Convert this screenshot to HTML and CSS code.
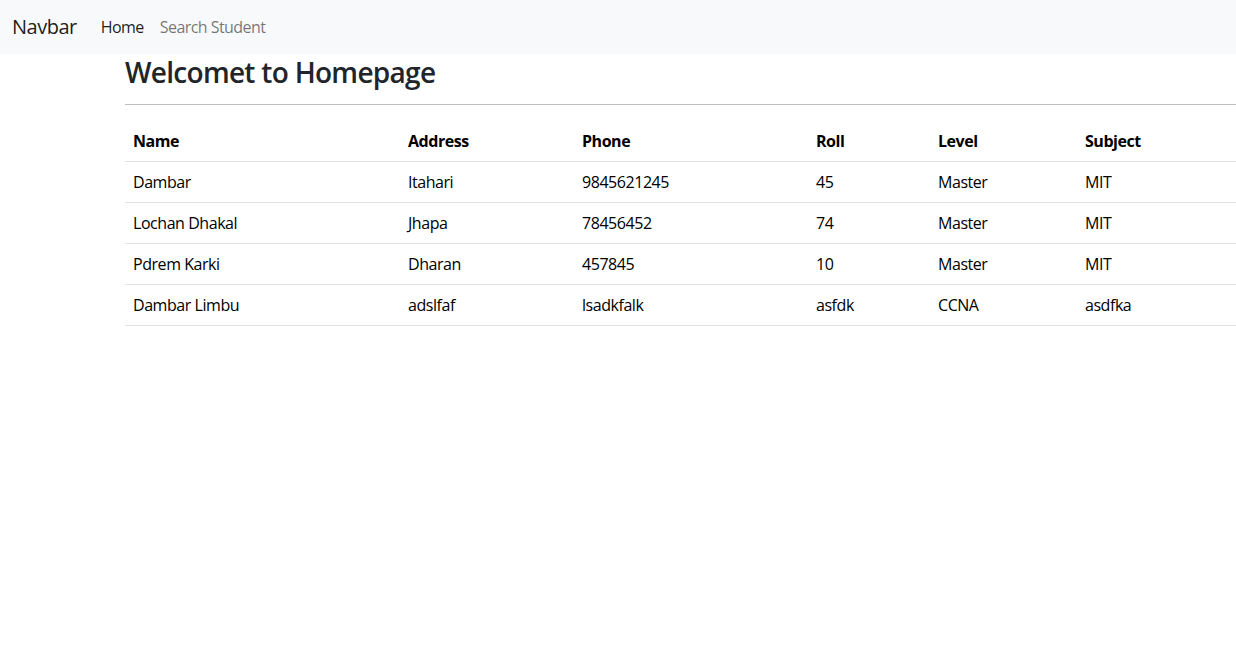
FILE: index.html
```html
<!DOCTYPE html>
<html lang="en">
<head>
<meta charset="utf-8">
<title>Homepage</title>
<link rel="stylesheet" href="styles.css">
</head>
<body>
<nav class="navbar">
  <a class="brand" href="#">Navbar</a>
  <ul class="nav">
    <li><a class="nav-link active" href="#">Home</a></li>
    <li><a class="nav-link" href="#">Search Student</a></li>
  </ul>
</nav>
<main class="main">
  <h3 class="title">Welcomet to Homepage</h3>
  <hr class="rule">
  <table class="table">
    <thead>
      <tr><th>Name</th><th>Address</th><th>Phone</th><th>Roll</th><th>Level</th><th>Subject</th></tr>
    </thead>
    <tbody>
      <tr><td>Dambar</td><td>Itahari</td><td>9845621245</td><td>45</td><td>Master</td><td>MIT</td></tr>
      <tr><td>Lochan Dhakal</td><td>Jhapa</td><td>78456452</td><td>74</td><td>Master</td><td>MIT</td></tr>
      <tr><td>Pdrem Karki</td><td>Dharan</td><td>457845</td><td>10</td><td>Master</td><td>MIT</td></tr>
      <tr><td>Dambar Limbu</td><td>adslfaf</td><td>lsadkfalk</td><td>asfdk</td><td>CCNA</td><td>asdfka</td></tr>
    </tbody>
  </table>
</main>
</body>
</html>
```
FILE: styles.css
```css
* { box-sizing: border-box; }
html, body {
  margin: 0;
  padding: 0;
  background: #fff;
  color: #212529;
  font-family: "Open Sans", "Noto Sans", sans-serif;
  font-size: 16px;
  line-height: 1.5;
  letter-spacing: -0.45px;
}
.navbar {
  display: flex;
  align-items: center;
  height: 54px;
  padding: 0 12px;
  background: #f8f9fa;
}
.brand {
  font-size: 20px;
  color: rgba(0, 0, 0, 0.9);
  text-decoration: none;
  margin-right: 16px;
  letter-spacing: -0.5px;
}
.nav {
  display: flex;
  list-style: none;
  margin: 0;
  padding: 0;
}
.nav-link {
  display: block;
  padding: 8px;
  color: rgba(0, 0, 0, 0.55);
  text-decoration: none;
  letter-spacing: -0.55px;
}
.nav-link.active { color: rgba(0, 0, 0, 0.9); }
.main {
  padding-left: 125px;
}
.title {
  margin: 2px 0 0;
  font-size: 28px;
  font-weight: 600;
  line-height: 1.2;
  letter-spacing: -0.7px;
}
.rule {
  margin: 14px 0 16px;
  border: 0;
  border-top: 1px solid rgba(0, 0, 0, 0.25);
}
.table {
  width: 1111px;
  border-collapse: collapse;
  color: #212529;
}
.table th, .table td {
  padding: 8px;
  text-align: left;
  border-bottom: 1px solid #dee2e6;
  vertical-align: top;
}
.table th { font-weight: 700; color: #000; }
.table td { color: #000; }
.table th:nth-child(1) { width: 275px; }
.table th:nth-child(2) { width: 174px; }
.table th:nth-child(3) { width: 234px; }
.table th:nth-child(4) { width: 122px; }
.table th:nth-child(5) { width: 147px; }
```
